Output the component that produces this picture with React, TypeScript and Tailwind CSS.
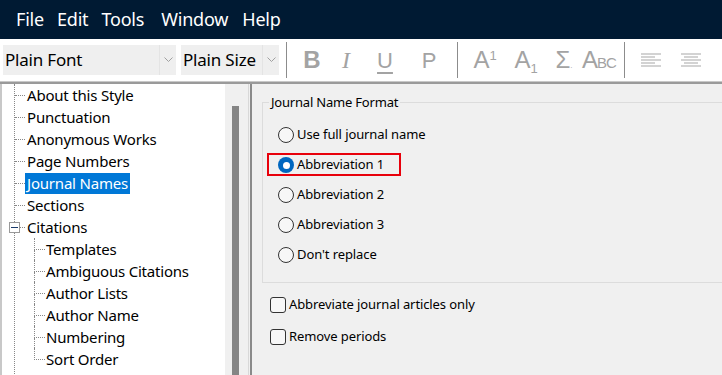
import { ReactNode } from "react";

const font = { fontFamily: '"Noto Sans", "Open Sans", sans-serif' };

type Node = { label: string; selected?: boolean; children?: string[] };

const tree: Node[] = [
  { label: "About this Style" },
  { label: "Punctuation" },
  { label: "Anonymous Works" },
  { label: "Page Numbers" },
  { label: "Journal Names", selected: true },
  { label: "Sections" },
  {
    label: "Citations",
    children: ["Templates", "Ambiguous Citations", "Author Lists", "Author Name", "Numbering", "Sort Order"],
  },
];

function Sep() {
  return <div className="mx-[7px] h-[36px] w-px bg-[#8c8c8c]" />;
}

function Combo({ label, width }: { label: string; width: string }) {
  return (
    <div className={`flex h-[30px] items-center bg-[#efefef] ${width}`}>
      <span className="flex-1 whitespace-nowrap pl-[2px] text-[17px] leading-[24px] tracking-[-0.2px] text-black">
        {label}
      </span>
      <div className="flex h-full w-[17px] shrink-0 items-center justify-center border-l border-[#e4e4e4]">
        <svg width="9" height="6" viewBox="0 0 9 6">
          <path d="M0.5 0.5 L4.5 4.5 L8.5 0.5" fill="none" stroke="#a0a0a0" strokeWidth="1" />
        </svg>
      </div>
    </div>
  );
}

function Tool({ children, w }: { children: ReactNode; w: string }) {
  return <div className={`flex h-[36px] items-center justify-center text-[#a3a3a3] ${w}`}>{children}</div>;
}

function AlignIcon({ center }: { center?: boolean }) {
  const rows = [0, 3, 6, 9, 12];
  return (
    <svg width="20" height="14" viewBox="0 0 20 14">
      {rows.map((y, i) => {
        const short = i % 2 === 1;
        const w = short ? 14 : 20;
        const x = center ? (20 - w) / 2 : 0;
        return <rect key={y} x={x} y={y + 0.5} width={w} height="1" fill="#a8a8a8" />;
      })}
    </svg>
  );
}

function Radio({ label, checked }: { label: string; checked?: boolean }) {
  return (
    <div className="flex h-[30px] items-center">
      {checked ? (
        <div className="flex h-[16px] w-[16px] items-center justify-center rounded-full bg-[#0067c0]">
          <div className="h-[7px] w-[7px] rounded-full bg-white" />
        </div>
      ) : (
        <div className="h-[16px] w-[16px] rounded-full border border-[#333] bg-[#f7f7f7]" />
      )}
      <span className="ml-[3px] text-[13px] tracking-[-0.1px] text-black">{label}</span>
    </div>
  );
}

function Check({ label }: { label: string }) {
  return (
    <div className="flex h-[32px] items-center">
      <div className="h-[16px] w-[16px] rounded-[3px] border border-[#333] bg-[#f7f7f7]" />
      <span className="ml-[3px] text-[13px] tracking-[-0.1px] text-black">{label}</span>
    </div>
  );
}

export default function App() {
  return (
    <div className="flex h-[375px] w-[722px] flex-col overflow-hidden bg-[#f0f0f0]" style={font}>
      {/* menu bar */}
      <div className="flex h-[39px] shrink-0 items-center gap-[13px] bg-[#001a33] pl-[16px] text-[18px] tracking-[-0.2px] text-white">
        <span>File</span>
        <span>Edit</span>
        <span>Tools</span>
        <span className="ml-[4px]">Window</span>
        <span className="ml-[1px]">Help</span>
      </div>

      {/* toolbar */}
      <div className="flex h-[42px] shrink-0 items-center bg-white pl-[3px]">
        <Combo label="Plain Font" width="w-[173px]" />
        <div className="w-[5px]" />
        <Combo label="Plain Size" width="w-[98px]" />
        <Sep />
        <Tool w="w-[36px]">
          <span className="text-[24px] font-bold" style={{ fontFamily: '"Liberation Sans", sans-serif' }}>B</span>
        </Tool>
        <Tool w="w-[32px]">
          <span className="text-[24px] italic" style={{ fontFamily: '"Liberation Serif", serif' }}>I</span>
        </Tool>
        <Tool w="w-[46px]">
          <span className="text-[22px] underline underline-offset-[4px]" style={{ fontFamily: '"Liberation Sans", sans-serif' }}>U</span>
        </Tool>
        <Tool w="w-[42px]">
          <span className="text-[22px]" style={{ fontFamily: '"Liberation Sans", sans-serif' }}>P</span>
        </Tool>
        <Sep />
        <Tool w="w-[40px]">
          <span className="text-[24px]" style={{ fontFamily: '"Liberation Sans", sans-serif' }}>
            A<span className="relative -top-[8px] text-[13px]">1</span>
          </span>
        </Tool>
        <Tool w="w-[42px]">
          <span className="text-[24px]" style={{ fontFamily: '"Liberation Sans", sans-serif' }}>
            A<span className="relative top-[5px] text-[13px]">1</span>
          </span>
        </Tool>
        <Tool w="w-[34px]">
          <span className="text-[24px]" style={{ fontFamily: '"Liberation Sans", sans-serif' }}>
            Σ<span className="text-[8px]">.</span>
          </span>
        </Tool>
        <Tool w="w-[36px]">
          <span className="tracking-[-1px]" style={{ fontFamily: '"Liberation Sans", sans-serif' }}>
            <span className="text-[24px]">A</span>
            <span className="text-[15px]">BC</span>
          </span>
        </Tool>
        <Sep />
        <Tool w="w-[38px]">
          <AlignIcon />
        </Tool>
        <Tool w="w-[42px]">
          <AlignIcon center />
        </Tool>
      </div>
      <div className="h-[1px] shrink-0 bg-[#c8c8c8]" />
      <div className="h-[2px] shrink-0 bg-[#9a9a9a]" />

      {/* body */}
      <div className="flex min-h-0 flex-1">
        {/* tree */}
        <div className="flex w-[250px] shrink-0 border-l-2 border-[#c8c8c8]">
          <div className="w-[223px] bg-white text-[15px] tracking-[-0.2px] text-black">
            <div className="ml-[12px] border-l border-dotted border-[#888]">
              {tree.map((n) => (
                <div key={n.label}>
                  <div className="flex h-[22px] items-center">
                    {n.children ? (
                      <div className="-ml-[6px] flex items-center">
                        <div className="flex h-[11px] w-[11px] items-center justify-center border border-[#999] bg-white">
                          <div className="h-px w-[7px] bg-[#1b3c6b]" />
                        </div>
                        <div className="w-[5px] border-t border-dotted border-[#888]" />
                      </div>
                    ) : (
                      <div className="w-[10px] border-t border-dotted border-[#888]" />
                    )}
                    <span
                      className={`px-[2px] leading-[21px] ${n.selected ? "bg-[#0078d7] text-white" : ""}`}
                    >
                      {n.label}
                    </span>
                  </div>
                  {n.children && (
                    <div className="ml-[19px] w-fit pb-[20px]">
                      {n.children.map((c, i) => (
                        <div key={c} className="flex h-[22px] items-stretch">
                          <div className="flex w-[11px] flex-col">
                            <div className="flex-1 border-b border-l border-dotted border-[#888]" />
                            <div className={`flex-1 ${i < n.children!.length - 1 ? "border-l border-dotted border-[#888]" : ""}`} />
                          </div>
                          <span className="px-[1px] leading-[22px]">{c}</span>
                        </div>
                      ))}
                    </div>
                  )}
                </div>
              ))}
            </div>
          </div>
          <div className="flex w-[23px] justify-start bg-[#f0f0f0] pl-[7px]">
            <div className="mt-[22px] h-full w-[7px] bg-[#858585]" />
          </div>
          <div className="w-px bg-[#d8d8d8]" />
          <div className="w-px bg-[#f0f0f0]" />
        </div>
        <div className="w-[2px] shrink-0 bg-[#8a8a8a]" />

        {/* right panel */}
        <div className="flex-1 pl-[10px] pt-[18px]">
          <div className="relative mr-[-20px] h-[181px] border border-[#dcdcdc] pl-[15px] pt-[17px]">
            <span className="absolute -top-[10px] left-[6px] bg-[#f0f0f0] px-[2px] text-[13px] tracking-[-0.2px] text-black">
              Journal Name Format
            </span>
            <Radio label="Use full journal name" />
            <div className="relative">
              <div className="pointer-events-none absolute -left-[11px] top-[3px] h-[23px] w-[134px] border-2 border-[#e8000b]" />
              <Radio label="Abbreviation 1" checked />
            </div>
            <Radio label="Abbreviation 2" />
            <Radio label="Abbreviation 3" />
            <Radio label="Don't replace" />
          </div>
          <div className="pl-[8px] pt-[6px]">
            <Check label="Abbreviate journal articles only" />
            <Check label="Remove periods" />
          </div>
        </div>
      </div>
    </div>
  );
}
